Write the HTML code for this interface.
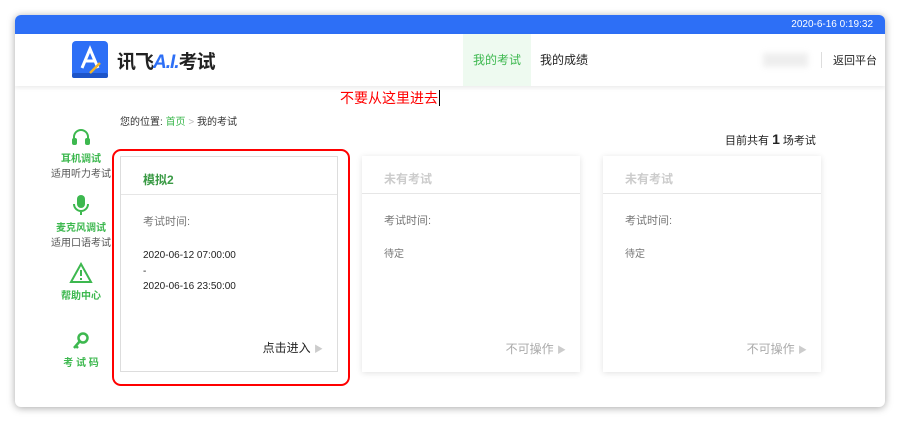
<!DOCTYPE html><html><head><meta charset="utf-8"><style>
*{margin:0;padding:0;box-sizing:border-box}
body{width:900px;height:422px;background:#fff;font-family:"Liberation Sans","Noto Sans CJK SC",sans-serif;position:relative;overflow:hidden;font-size:11px;color:#333}
.win{position:absolute;left:15px;top:15px;width:870px;height:392px;background:#fff;border-radius:6px;box-shadow:0 1px 8px rgba(0,0,0,.35);overflow:hidden}
.top{height:19px;background:#2d6ff6;color:#fff;text-align:right;padding-right:12px;font-size:10px;line-height:19px}
.hdr{height:52px;position:relative;box-shadow:0 2px 4px rgba(0,0,0,.08)}
.a{position:absolute}
.card{position:absolute;top:141px;width:218px;height:216px;background:#fff;box-shadow:0 1px 6px rgba(0,0,0,.12)}
.card .t{height:38px;border-bottom:1px solid #e6e6e6;padding:14px 0 0 22px;font-size:12px;font-weight:bold;color:#ccc}
.card .l{position:absolute;left:22px;top:56px;color:#777;font-size:11px}
.card .d{position:absolute;left:22px;top:91px;color:#777;font-size:10px;line-height:15.5px}
.card .b{position:absolute;right:14px;bottom:15px;color:#aaa;font-size:12px}
.side{position:absolute;left:28px;width:76px;text-align:center;color:#3db84f;font-weight:bold;font-size:10px}
.side small{display:block;color:#555;font-weight:normal;font-size:10px}
</style></head><body>
<div class="win">
<div class="top">2020-6-16 0:19:32</div>
<div class="hdr">
<svg class="a" style="left:55px;top:7px" width="40" height="39" viewBox="0 0 40 39"><rect x="2" y="0" width="36" height="36" rx="4" fill="#2d6ff6"/><rect x="2" y="32" width="36" height="5" rx="2" fill="#1d54c8"/><path d="M12 27 L20 8 L28 27 M15 20 H25" stroke="#fff" stroke-width="3" fill="none"/><path d="M20 32 L30 22" stroke="#f3b526" stroke-width="2.5"/></svg>
<div class="a" style="left:102px;top:13px;font-size:19px;font-weight:bold;color:#222;letter-spacing:-1px">讯飞<span style="color:#2d6ff6;font-style:italic">A.I.</span>考试</div>
<div class="a" style="left:448px;top:0;width:68px;height:52px;background:#eefaf0;color:#3db84f;font-size:12px;line-height:52px;text-align:center">我的考试</div>
<div class="a" style="left:525px;top:0;font-size:12px;line-height:52px;color:#222">我的成绩</div>
<div class="a" style="left:748px;top:19px;width:45px;height:14px;background:#eee;filter:blur(3px)"></div>
<div class="a" style="left:806px;top:18px;width:1px;height:16px;background:#ddd"></div>
<div class="a" style="left:818px;top:0;font-size:11px;line-height:54px;color:#222">返回平台</div>
</div>
<div class="a" style="left:325px;top:73px;color:#f00;font-size:14px">不要从这里进去<span style="border-left:1px solid #000;margin-left:1px"></span></div>
<div class="a" style="left:105px;top:98px;font-size:10px;color:#333">您的位置: <span style="color:#3db84f">首页</span> <span style="color:#bbb">&gt;</span> 我的考试</div>
<div class="a" style="left:710px;top:116px;font-size:11px;color:#222">目前共有 <b style="font-size:14px">1</b> 场考试</div>
<div class="side" style="top:112px"><svg width="24" height="20" viewBox="0 0 24 20"><path d="M5 14 V10 A7 7 0 0 1 19 10 V14" stroke="#3db84f" stroke-width="2" fill="none"/><rect x="3" y="11" width="5" height="7" rx="2" fill="#3db84f"/><rect x="16" y="11" width="5" height="7" rx="2" fill="#3db84f"/></svg><br>耳机调试<small>适用听力考试</small></div>
<div class="side" style="top:179px"><svg width="20" height="22" viewBox="0 0 20 22"><rect x="6" y="1" width="8" height="13" rx="4" fill="#3db84f"/><path d="M3 10 A7 7 0 0 0 17 10 M10 17 V21" stroke="#3db84f" stroke-width="2" fill="none"/></svg><br>麦克风调试<small>适用口语考试</small></div>
<div class="side" style="top:247px"><svg width="24" height="22" viewBox="0 0 24 22"><path d="M12 2 L22 20 H2 Z" stroke="#3db84f" stroke-width="2" fill="none"/><path d="M12 8 V14 M12 16 V18" stroke="#3db84f" stroke-width="2"/></svg><br>帮助中心</div>
<div class="side" style="top:316px"><svg width="20" height="20" viewBox="0 0 20 20"><circle cx="12" cy="7" r="4.5" stroke="#3db84f" stroke-width="2.5" fill="none"/><path d="M9 10 L3 17 M5 15 L7 17" stroke="#3db84f" stroke-width="2.5"/></svg><br>考 试 码</div>
<div class="a" style="left:97px;top:134px;width:238px;height:237px;border:2px solid #f00;border-radius:9px"></div>
<div class="card" style="left:105px;border:1px solid #ddd;box-shadow:none"><div class="t" style="color:#3a9a45">模拟2</div><div class="l">考试时间:</div><div class="d" style="color:#222">2020-06-12 07:00:00<br>-<br>2020-06-16 23:50:00</div><div class="b" style="color:#222">点击进入 <span style="color:#ccc;font-size:9px">▶</span></div></div>
<div class="card" style="left:347px"><div class="t">未有考试</div><div class="l">考试时间:</div><div class="d">待定</div><div class="b">不可操作 <span style="color:#ccc;font-size:9px">▶</span></div></div>
<div class="card" style="left:588px"><div class="t">未有考试</div><div class="l">考试时间:</div><div class="d">待定</div><div class="b">不可操作 <span style="color:#ccc;font-size:9px">▶</span></div></div>
</div>
</body></html>
